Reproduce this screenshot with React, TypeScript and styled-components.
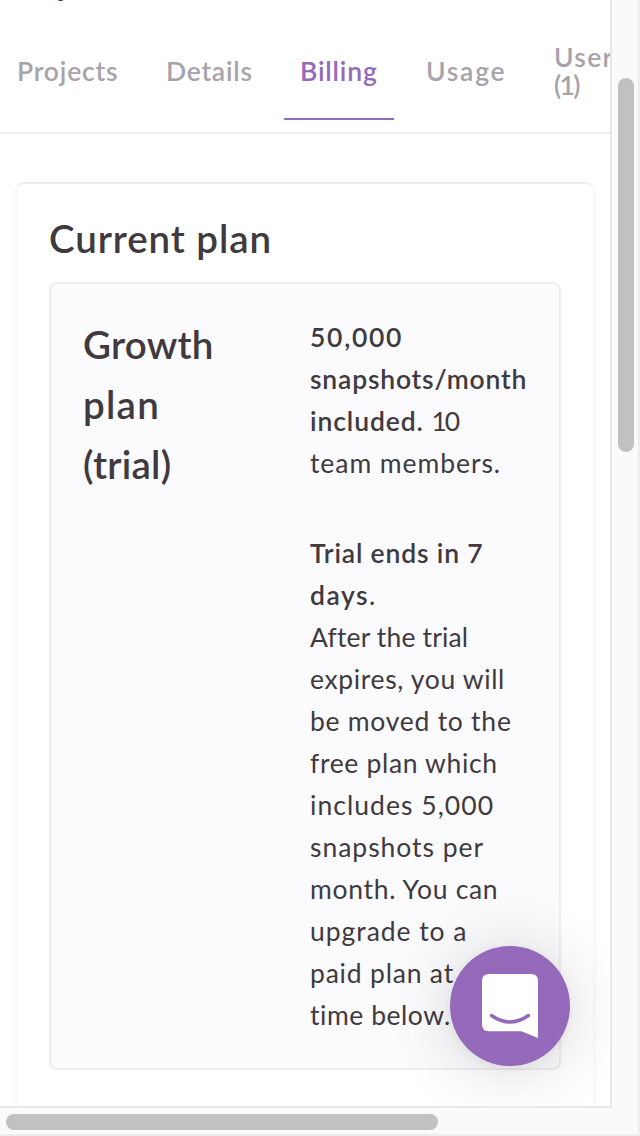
import React from "react";
import styled, { createGlobalStyle } from "styled-components";

const Global = createGlobalStyle`
  * { box-sizing: border-box; }
  html, body { margin: 0; padding: 0; background: #fff; }
  body { font-family: Lato, "Liberation Sans", sans-serif; color: #403a3f; overflow: hidden; }
`;

const Window = styled.div`
  display: grid;
  grid-template-columns: 612px 28px;
  grid-template-rows: 1108px 28px;
  width: 640px;
  height: 1136px;
  overflow: hidden;
  background: #fafafa;
`;

const Viewport = styled.main`
  display: flex;
  flex-direction: column;
  overflow: hidden;
  background: #fff;
  border-right: 2px solid #e8e8e8;
  border-bottom: 2px solid #e8e8e8;
`;

const VerticalTrack = styled.div`
  grid-row: 1 / 3;
  grid-column: 2;
  padding: 78px 0 0 6px;
  border-right: 2px solid #ededed;
`;

const HorizontalTrack = styled.div`
  grid-row: 2;
  grid-column: 1 / 3;
  padding: 6px 0 0 6px;
  border-bottom: 2px solid #ededed;
`;

const Thumb = styled.div<{ $w: number; $h: number }>`
  width: ${(p) => p.$w}px;
  height: ${(p) => p.$h}px;
  border-radius: 8px;
  background: #c1c1c1;
`;

const PageTitle = styled.h1`
  flex: none;
  display: flex;
  align-items: flex-end;
  margin: 0;
  height: 2px;
  padding-left: 56px;
  font-size: 38px;
  line-height: 45px;
  font-weight: 600;
  overflow: hidden;
`;

const Tabs = styled.nav`
  flex: none;
  display: flex;
  align-items: flex-start;
  gap: 16px;
  height: 132px;
  padding-top: 42px;
  border-bottom: 2px solid #eeeeee;
`;

const Tab = styled.a<{ $active?: boolean; $w: number; $ls: number }>`
  flex: none;
  display: flex;
  flex-direction: column;
  justify-content: center;
  width: ${(p) => p.$w}px;
  height: 76px;
  padding: 0 0 21px 16px;
  border-bottom: 2px solid ${(p) => (p.$active ? "#9569ba" : "transparent")};
  color: ${(p) => (p.$active ? "#9569ba" : "#a8a2aa")};
  font-size: 26.5px;
  line-height: 28px;
  font-weight: 600;
  letter-spacing: ${(p) => p.$ls}px;

  &:first-child {
    padding-left: 17px;
  }
`;

const Card = styled.section`
  flex: none;
  margin: 48px 17px 0 17px;
  height: 1000px;
  padding: 24px 32px 0 32px;
  border-top: 2px solid #eeeeee;
  border-radius: 8px;
  box-shadow: 0 2px 6px rgba(0, 0, 0, 0.07);
`;

const CardTitle = styled.h2`
  margin: 0 0 14px;
  font-size: 38.5px;
  line-height: 60px;
  font-weight: 600;
  letter-spacing: 0.9px;
`;

const PlanBox = styled.div`
  display: grid;
  grid-template-columns: 227px 1fr;
  height: 788px;
  padding: 32px 0 0 32px;
  border: 2px solid #eeeef0;
  border-radius: 8px;
  background: #fbfbfe;
`;

const PlanName = styled.h3`
  margin: -2px 0 0;
  font-size: 38.5px;
  line-height: 60px;
  font-weight: 600;
`;

const Paragraph = styled.p`
  margin: 0 0 48px;
  font-size: 26.5px;
  line-height: 42px;
`;

const Line = styled.span<{ $ls?: number }>`
  display: block;
  white-space: nowrap;
  letter-spacing: ${(p) => p.$ls ?? 0}px;
`;

const Strong = styled.strong`
  font-weight: 600;
`;

const Figure = styled.span`
  letter-spacing: -2px;
`;

const Launcher = styled.button`
  position: fixed;
  left: 450px;
  top: 946px;
  width: 120px;
  height: 120px;
  padding: 0;
  border: 0;
  border-radius: 50%;
  background: #9569ba;
  box-shadow: 0 2px 12px rgba(0, 0, 0, 0.06), 0 4px 64px rgba(0, 0, 0, 0.16);
`;

const FloatArea = styled.div`
  position: fixed;
  inset: 0 30px 30px 0;
  overflow: hidden;
  clip-path: inset(0);
`;

const LauncherIcon = styled.svg`
  display: block;
`;

const tabs = [
  { label: "Projects", w: 134, ls: 0.8 },
  { label: "Details", w: 118, ls: 0.75 },
  { label: "Billing", w: 110, ls: 0.85, active: true },
  { label: "Usage", w: 112, ls: 1.75 },
];

const trial = [
  { text: "After the trial", ls: 0.15 },
  { text: "expires, you will", ls: 0.65 },
  { text: "be moved to the", ls: 0.74 },
  { text: "free plan which", ls: 0.66 },
  { text: "includes 5,000", ls: 1.05 },
  { text: "snapshots per", ls: 0.96 },
  { text: "month. You can", ls: 0.7 },
  { text: "upgrade to a", ls: 0.95 },
  { text: "paid plan at any", ls: 0.8 },
  { text: "time below.", ls: 0.54 },
];

export default function App() {
  return (
    <Window>
      <Global />
      <Viewport>
        <PageTitle>p</PageTitle>
        <Tabs>
          {tabs.map((t) => (
            <Tab key={t.label} $w={t.w} $ls={t.ls} $active={t.active}>
              {t.label}
            </Tab>
          ))}
          <Tab $w={110} $ls={0}>
            <Line $ls={1.3}>Users</Line>
            <Line $ls={-1.7}>(1)</Line>
          </Tab>
        </Tabs>
        <Card>
          <CardTitle>Current plan</CardTitle>
          <PlanBox>
            <PlanName>
              <Line $ls={0.25}>Growth</Line>
              <Line $ls={1.25}>plan</Line>
              <Line $ls={0.25}>(trial)</Line>
            </PlanName>
            <div>
              <Paragraph>
                <Line $ls={1.7}><Strong>50,000</Strong></Line>
                <Line $ls={0.8}><Strong>snapshots/month</Strong></Line>
                <Line $ls={0.9}><Strong>included.</Strong> <Figure>10</Figure></Line>
                <Line $ls={0.93}>team members.</Line>
              </Paragraph>
              <Paragraph>
                <Line $ls={0.82}><Strong>Trial ends in 7</Strong></Line>
                <Line $ls={1.5}><Strong>days</Strong>.</Line>
                {trial.map((l) => (
                  <Line key={l.text} $ls={l.ls}>{l.text}</Line>
                ))}
              </Paragraph>
            </div>
          </PlanBox>
        </Card>
      </Viewport>
      <VerticalTrack>
        <Thumb $w={16} $h={374} />
      </VerticalTrack>
      <HorizontalTrack>
        <Thumb $w={432} $h={16} />
      </HorizontalTrack>
      <FloatArea>
        <Launcher aria-label="Open chat">
          <LauncherIcon width="120" height="120" viewBox="0 0 120 120">
            <path
              d="M39 28H81Q88 28 88 35V92L71.500 85.300H39Q32 85.300 32 78.300V35Q32 28 39 28Z"
              fill="#fff"
            />
            <path
              d="M41.500 69.500Q60 82.500 78.500 69.500"
              fill="none"
              stroke="#9569ba"
              strokeWidth="3.400"
              strokeLinecap="round"
            />
          </LauncherIcon>
        </Launcher>
      </FloatArea>
    </Window>
  );
}
